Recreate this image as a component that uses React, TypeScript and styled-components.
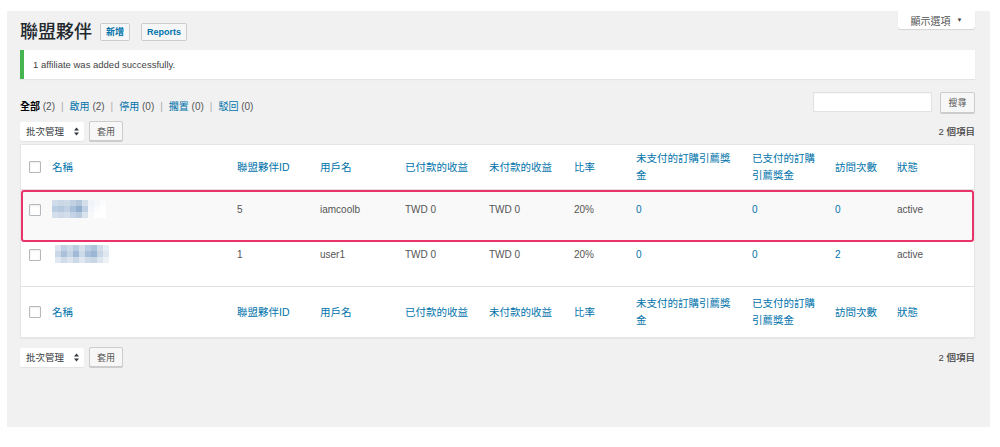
import styled, { createGlobalStyle } from "styled-components";

const GlobalStyle = createGlobalStyle`
  html, body {
    margin: 0;
    padding: 0;
    background: #fff;
  }
  body {
    font-family: "Liberation Sans", "Noto Sans CJK TC", sans-serif;
    color: #444;
  }
  * {
    box-sizing: border-box;
  }
`;

const Panel = styled.div`
  margin: 11px 10px 0 7px;
  height: 416px;
  background: #f1f1f1;
  padding: 0 15px 0 13px;
`;

const HeaderBar = styled.div`
  display: flex;
  justify-content: space-between;
  align-items: flex-start;
`;

const TitleRow = styled.div`
  margin-top: 11px;
  height: 20px;
  display: flex;
  align-items: center;
`;

const Title = styled.h1`
  margin: 0 8px 0 0;
  font-size: 18px;
  font-weight: 500;
  line-height: 20px;
  color: #23282d;
`;

const ActionButton = styled.span`
  height: 18px;
  margin-right: 11px;
  padding: 0 5px;
  border: 1px solid #ccc;
  border-radius: 2px;
  background: #f7f7f7;
  color: #0073aa;
  font-size: 9px;
  font-weight: 700;
  line-height: 16px;
`;

const ScreenTab = styled.div`
  width: 77px;
  height: 18px;
  background: #fff;
  border-radius: 0 0 3px 3px;
  box-shadow: 0 1px 1px rgba(0, 0, 0, 0.12);
  display: flex;
  align-items: center;
  justify-content: center;
  gap: 6px;
  font-size: 10px;
  color: #555;
`;

const Caret = styled.span`
  font-size: 6px;
  color: #444;
`;

const Notice = styled.div`
  margin-top: 8px;
  height: 29px;
  background: #fff;
  border-left: 4px solid #46b450;
  box-shadow: 0 1px 1px rgba(0, 0, 0, 0.05);
  padding: 0 9px;
  display: flex;
  align-items: center;
  font-size: 9.5px;
  color: #444;
`;

const FilterRow = styled.div`
  margin-top: 13px;
  height: 21px;
  display: flex;
  justify-content: space-between;
`;

const Views = styled.div`
  align-self: flex-end;
  margin-bottom: -1px;
  font-size: 10px;
  line-height: 14px;
  color: #555;
`;

const ViewLabel = styled.span<{ $current?: boolean }>`
  color: ${(p) => (p.$current ? "#000" : "#0073aa")};
  font-weight: ${(p) => (p.$current ? 700 : 400)};
`;

const Sep = styled.span`
  margin: 0 6px;
  color: #aaa;
`;

const SearchBox = styled.div`
  display: flex;
  gap: 8px;
`;

const SearchInput = styled.div`
  width: 119px;
  height: 20px;
  background: #fff;
  border: 1px solid #e2e2e2;
  box-shadow: inset 0 1px 2px rgba(0, 0, 0, 0.04);
`;

const Button = styled.span<{ $w: number; $h?: number }>`
  width: ${(p) => p.$w}px;
  height: ${(p) => p.$h ?? 20}px;
  background: #f7f7f7;
  border: 1px solid #ccc;
  border-radius: 2px;
  box-shadow: 0 1px 0 #ccc;
  display: flex;
  align-items: center;
  justify-content: center;
  font-size: 9px;
  color: #555;
`;

const Tablenav = styled.div<{ $top: number }>`
  margin-top: ${(p) => p.$top}px;
  height: 20px;
  display: flex;
  justify-content: space-between;
  align-items: center;
`;

const BulkGroup = styled.div`
  display: flex;
  align-items: center;
  gap: 5px;
`;

const Select = styled.div`
  width: 64px;
  height: 19px;
  background: #fff;
  border-radius: 2px;
  box-shadow: 0 1px 1px rgba(0, 0, 0, 0.06);
  display: flex;
  align-items: center;
  justify-content: space-between;
  padding: 0 5px 0 6px;
  font-size: 9.5px;
  color: #32373c;
`;

const Count = styled.span`
  font-size: 9.5px;
  font-weight: 500;
  color: #444;
`;

const Table = styled.div`
  margin-top: 3px;
  background: #fff;
  border: 1px solid #e5e5e5;
  box-shadow: 0 1px 1px rgba(0, 0, 0, 0.04);
`;

const COLUMNS = "31px 185px 83px 85px 84px 85px 62px 116px 83px 62px 77px";

const HeadRow = styled.div<{ $h: number; $foot?: boolean }>`
  display: grid;
  grid-template-columns: ${COLUMNS};
  height: ${(p) => p.$h}px;
  align-items: center;
  border-top: ${(p) => (p.$foot ? "1px solid #e1e1e1" : "0")};
  border-bottom: ${(p) => (p.$foot ? "0" : "1px solid #e1e1e1")};
`;

const HeadCell = styled.div`
  padding-right: 14px;
  font-size: 10.5px;
  line-height: 17px;
  color: #0073aa;
`;

const BodyRow = styled.div<{ $h: number; $pad: number; $marked?: boolean; $striped?: boolean }>`
  display: grid;
  grid-template-columns: ${COLUMNS};
  height: ${(p) => p.$h}px;
  padding-top: ${(p) => p.$pad}px;
  align-items: start;
  background: ${(p) => (p.$striped ? "#f9f9f9" : "#fff")};
  border-radius: ${(p) => (p.$marked ? "3px" : "0")};
  box-shadow: ${(p) => (p.$marked ? "inset 0 0 0 2px #e8336b" : "none")};
`;

const Cell = styled.div<{ $link?: boolean }>`
  font-size: 10px;
  line-height: 14px;
  color: ${(p) => (p.$link ? "#0073aa" : "#555")};
`;

const CheckCell = styled.div`
  padding-left: 8px;
  display: flex;
`;

const Checkbox = styled.span<{ $top?: number }>`
  width: 12px;
  height: 12px;
  margin-top: ${(p) => p.$top ?? 0}px;
  background: #fff;
  border: 1px solid #b4b9be;
  border-radius: 1px;
  box-shadow: inset 0 1px 2px rgba(0, 0, 0, 0.08);
`;

const Mosaic = styled.span<{ $cols: number; $left: number; $top: number }>`
  display: grid;
  grid-template-columns: repeat(${(p) => p.$cols}, 6px);
  grid-auto-rows: 6px;
  width: max-content;
  margin-left: ${(p) => p.$left}px;
  margin-top: ${(p) => p.$top}px;
  filter: blur(0.7px);
`;

const Pixel = styled.span<{ $c: string }>`
  background: ${(p) => p.$c};
`;

const mosaicA = [
  ["#d0dcea", "#c9d7e6", "#cddae8", "#c1d1e3", "#b4c7dd", "#d4dfec", "#f1f5f9", "#f6f8fb", "#fbfcfd"],
  ["#bccee2", "#b6c9df", "#c2d2e4", "#a9c0d9", "#93afcf", "#bfd0e3", "#f3f6fa", "#fafbfc", "#fff"],
  ["#d4dfeb", "#cedae8", "#d3deeb", "#c4d3e5", "#bacbe0", "#d9e3ee", "#f8f9fb", "#fff", "#fff"],
];

const mosaicB = [
  ["#dae3ee", "#c1d1e3", "#cedae8", "#bacce0", "#d6e0ec", "#bdcee2", "#adc2db", "#d2ddea", "#e6edf4"],
  ["#c9d7e7", "#abc1da", "#c6d5e6", "#a1bad6", "#ccd9e8", "#a8bfd9", "#9bb6d4", "#c9d7e7", "#dfe7f1"],
  ["#e0e8f1", "#d0dcea", "#dbe4ef", "#ccd9e8", "#dfe7f0", "#cfdbe9", "#c8d6e6", "#dde5f0", "#edf2f7"],
];

function NameBlur({ cells, left, top }: { cells: string[][]; left: number; top: number }) {
  return (
    <Mosaic $cols={cells[0].length} $left={left} $top={top}>
      {cells.flat().map((c, i) => (
        <Pixel key={i} $c={c} />
      ))}
    </Mosaic>
  );
}

function SortArrows() {
  return (
    <svg width="5" height="9" viewBox="0 0 5 9">
      <path d="M2.5 0.5 L5 3.5 H0 Z" fill="#32373c" />
      <path d="M2.5 8.5 L5 5.5 H0 Z" fill="#32373c" />
    </svg>
  );
}

const headers = [
  "名稱",
  "聯盟夥伴ID",
  "用戶名",
  "已付款的收益",
  "未付款的收益",
  "比率",
  "未支付的訂購引薦獎金",
  "已支付的訂購引薦獎金",
  "訪問次數",
  "狀態",
];

const rows = [
  { id: "5", user: "iamcoolb", visits: "0", mosaic: mosaicA, left: 0, top: -3 },
  { id: "1", user: "user1", visits: "2", mosaic: mosaicB, left: 3, top: -3 },
];

function Head({ foot }: { foot?: boolean }) {
  return (
    <HeadRow $h={foot ? 51 : 45} $foot={foot}>
      <CheckCell>
        <Checkbox />
      </CheckCell>
      {headers.map((h) => (
        <HeadCell key={h}>{h}</HeadCell>
      ))}
    </HeadRow>
  );
}

function BulkBar({ top }: { top: number }) {
  return (
    <Tablenav $top={top}>
      <BulkGroup>
        <Select>
          批次管理
          <SortArrows />
        </Select>
        <Button $w={34}>套用</Button>
      </BulkGroup>
      <Count>2 個項目</Count>
    </Tablenav>
  );
}

export default function App() {
  return (
    <>
      <GlobalStyle />
      <Panel>
        <HeaderBar>
          <TitleRow>
            <Title>聯盟夥伴</Title>
            <ActionButton>新增</ActionButton>
            <ActionButton>Reports</ActionButton>
          </TitleRow>
          <ScreenTab>
            顯示選項 <Caret>▼</Caret>
          </ScreenTab>
        </HeaderBar>

        <Notice>1 affiliate was added successfully.</Notice>

        <FilterRow>
          <Views>
            <ViewLabel $current>全部</ViewLabel> (2)<Sep>|</Sep>
            <ViewLabel>啟用</ViewLabel> (2)<Sep>|</Sep>
            <ViewLabel>停用</ViewLabel> (0)<Sep>|</Sep>
            <ViewLabel>擱置</ViewLabel> (0)<Sep>|</Sep>
            <ViewLabel>駁回</ViewLabel> (0)
          </Views>
          <SearchBox>
            <SearchInput />
            <Button $w={35} $h={21}>搜尋</Button>
          </SearchBox>
        </FilterRow>

        <BulkBar top={8} />

        <Table>
          <Head />
          {rows.map((r, i) => (
            <BodyRow
              key={r.id}
              $h={i === 0 ? 52 : 44}
              $pad={i === 0 ? 13 : 6}
              $marked={i === 0}
              $striped={i === 0}
            >
              <CheckCell>
                <Checkbox $top={1} />
              </CheckCell>
              <Cell>
                <NameBlur cells={r.mosaic} left={r.left} top={r.top} />
              </Cell>
              <Cell>{r.id}</Cell>
              <Cell>{r.user}</Cell>
              <Cell>TWD 0</Cell>
              <Cell>TWD 0</Cell>
              <Cell>20%</Cell>
              <Cell $link>0</Cell>
              <Cell $link>0</Cell>
              <Cell $link>{r.visits}</Cell>
              <Cell>active</Cell>
            </BodyRow>
          ))}
          <Head foot />
        </Table>

        <BulkBar top={9} />
      </Panel>
    </>
  );
}
